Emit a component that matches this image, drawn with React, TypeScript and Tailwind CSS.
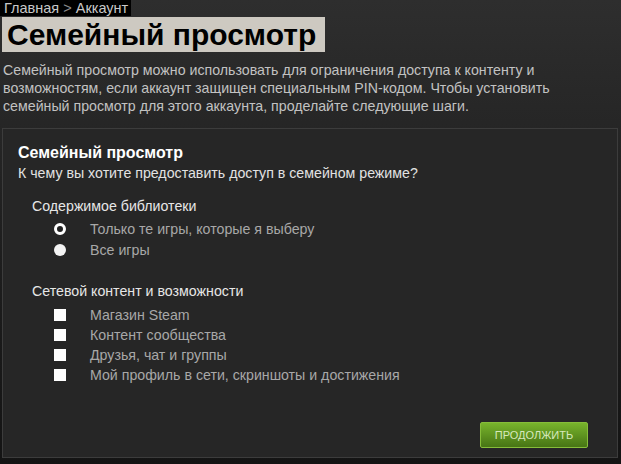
import React from "react";

// Family view setup page (Steam-style account settings)
const libraryOptions = [
  { label: "Только те игры, которые я выберу", selected: true },
  { label: "Все игры", selected: false },
];

const onlineOptions = [
  "Магазин Steam",
  "Контент сообщества",
  "Друзья, чат и группы",
  "Мой профиль в сети, скриншоты и достижения",
];

function Radio({ selected }: { selected: boolean }) {
  return selected ? (
    <span className="w-[12px] h-[12px] rounded-full border-[3px] border-white bg-[#222]" />
  ) : (
    <span className="w-[12px] h-[12px] rounded-full bg-[#f4f4f4]" />
  );
}

export default function App() {
  return (
    <div
      className="w-[621px] h-[464px] overflow-hidden bg-gradient-to-b from-[#2e2e2e] via-[#1f1f1f] to-[#141414] text-[14.2px] leading-[18px]"
      style={{ fontFamily: '"Liberation Sans", Arial, sans-serif' }}
    >
      {/* ── Breadcrumb ─────────────────────────────── */}
      <div className="flex">
        <div className="bg-black h-[16px] pl-[4px] pr-[3px] text-[14.5px] leading-[16px] text-[#c8c8c8]">
          Главная <span className="text-[#8a8a8a]">&gt;</span> Аккаунт
        </div>
      </div>

      {/* ── Page title ─────────────────────────────── */}
      <div className="flex mt-[1px] ml-[2px]">
        <h1 className="bg-[#cdc9c1] h-[35px] pl-[5px] pr-[9px] text-[30px] leading-[35px] font-bold text-black">
          Семейный просмотр
        </h1>
      </div>

      {/* ── Intro text ─────────────────────────────── */}
      <p className="mt-[9px] ml-[3px] whitespace-nowrap text-[#c2c2c2]">
        Семейный просмотр можно использовать для ограничения доступа к контенту и
        <br />
        возможностям, если аккаунт защищен специальным PIN-кодом. Чтобы установить
        <br />
        семейный просмотр для этого аккаунта, проделайте следующие шаги.
      </p>

      {/* ── Settings panel ─────────────────────────── */}
      <div className="flex mt-[13px]">
        <div className="ml-[2px] w-[616px] h-[330px] border border-[#3c3c3c] bg-[#262626] pl-[15px] pt-[14px] flex flex-col">
          <h2 className="text-[16px] leading-[20px] font-bold text-white">Семейный просмотр</h2>
          <p className="mt-[1px] text-[#e2e2e2]">К чему вы хотите предоставить доступ в семейном режиме?</p>

          <p className="mt-[15px] ml-[14px] text-[#e6e6e6]">Содержимое библиотеки</p>
          <div className="mt-[5px] flex flex-col gap-[3px]">
            {libraryOptions.map((o) => (
              <div key={o.label} className="flex items-center h-[18px]">
                <span className="w-[72px] flex justify-end pr-[24px]">
                  <Radio selected={o.selected} />
                </span>
                <span className="text-[#a8a8a8]">{o.label}</span>
              </div>
            ))}
          </div>

          <p className="mt-[23px] ml-[14px] text-[#e6e6e6]">Сетевой контент и возможности</p>
          <div className="mt-[6px] flex flex-col gap-[2px]">
            {onlineOptions.map((label) => (
              <div key={label} className="flex items-center h-[18px]">
                <span className="w-[72px] flex justify-end pr-[24px]">
                  <span className="w-[12px] h-[12px] bg-white" />
                </span>
                <span className="text-[#a8a8a8]">{label}</span>
              </div>
            ))}
          </div>

          <div className="mt-auto mb-[9px] flex justify-end pr-[29px]">
            <button className="w-[108px] h-[26px] rounded-[2px] border border-[#86bd3a] bg-gradient-to-b from-[#78b42c] to-[#477515] text-[11px] text-[#d6e8bc]">
              ПРОДОЛЖИТЬ
            </button>
          </div>
        </div>
      </div>
    </div>
  );
}
